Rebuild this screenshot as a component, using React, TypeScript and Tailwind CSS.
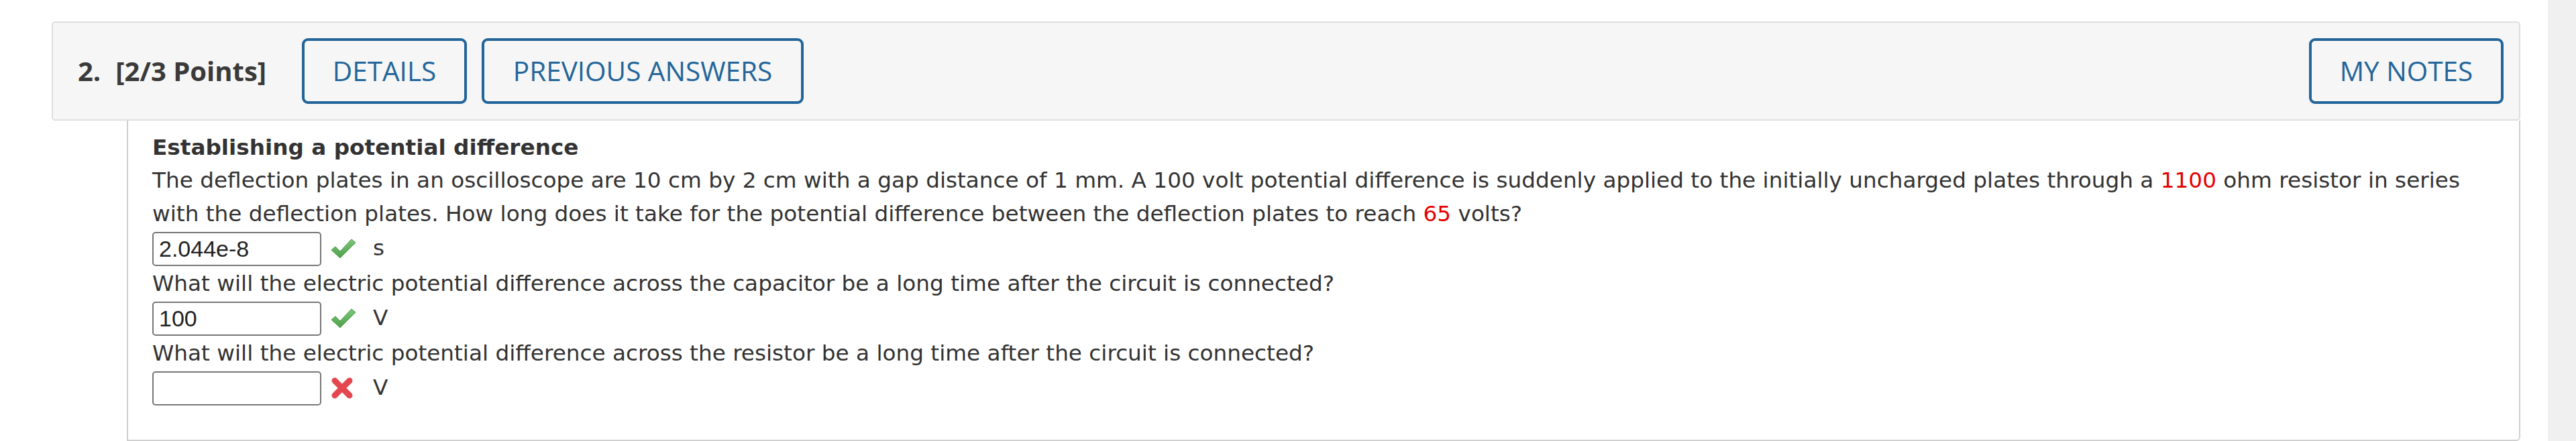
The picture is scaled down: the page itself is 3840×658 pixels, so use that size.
import React from 'react';

const verdana = "font-['DejaVu_Sans',Verdana,sans-serif]";

function CheckMark() {
  return (
    <svg width="40" height="32" viewBox="0 0 40 32" className="shrink-0">
      <defs>
        <linearGradient id="okg" x1="0" y1="0" x2="0" y2="1">
          <stop offset="0" stopColor="#7cc879" />
          <stop offset="1" stopColor="#4f9f4c" />
        </linearGradient>
      </defs>
      <path
        d="M2 18 L8 13 L15 20 L32 2 L38 7 L15 30 Z"
        fill="url(#okg)"
        stroke="#4a9a47"
        strokeWidth="1"
        strokeLinejoin="round"
      />
    </svg>
  );
}

function CrossMark() {
  return (
    <svg width="36" height="34" viewBox="0 0 36 34" className="shrink-0">
      <g stroke="#e5474f" strokeWidth="9" strokeLinecap="round">
        <line x1="7" y1="6" x2="29" y2="28" />
        <line x1="29" y1="6" x2="7" y2="28" />
      </g>
    </svg>
  );
}

function AnswerRow({ value, ok, unit }: { value: string; ok: boolean; unit: string }) {
  return (
    <div className="flex items-center h-[54px]">
      <div className="w-[252px] h-[51px] border-2 border-[#777] rounded-[5px] bg-white flex items-center pl-[8px] font-['Liberation_Sans',Arial,sans-serif] text-[34px] text-[#222]">
        {value}
      </div>
      <div className="ml-[13px] w-[40px] flex items-center">{ok ? <CheckMark /> : <CrossMark />}</div>
      <span className={`ml-[24px] text-[32.7px] text-[#333] ${verdana}`}>{unit}</span>
    </div>
  );
}

function HeaderButton({ label, width }: { label: string; width: string }) {
  return (
    <button
      className={`${width} h-[98px] border-4 border-[#23659a] rounded-[9px] text-[#23659a] text-[40.5px] font-medium font-['Open_Sans',sans-serif] flex items-center justify-center bg-transparent`}
    >
      {label}
    </button>
  );
}

export default function App() {
  return (
    <div className="flex w-full h-[658px] bg-white">
      <div className="flex-1 pt-[32px] pl-[77px] pr-[41px] flex flex-col">
        {/* question header */}
        <div className="h-[148px] border-2 border-[#dedede] rounded-[5px] bg-[#f6f6f6] flex items-center pl-[37px] pr-[23px]">
          <span className="font-['Open_Sans',sans-serif] font-bold text-[40px] text-[#3a3a3a]">2.</span>
          <span className="ml-[22px] font-['Open_Sans',sans-serif] font-bold text-[40px] text-[#3a3a3a]">[2/3 Points]</span>
          <div className="ml-[53px] flex gap-[22px]">
            <HeaderButton label="DETAILS" width="w-[246px]" />
            <HeaderButton label="PREVIOUS ANSWERS" width="w-[480px]" />
          </div>
          <div className="ml-auto">
            <HeaderButton label="MY NOTES" width="w-[290px]" />
          </div>
        </div>

        {/* question body */}
        <div className={`flex-1 ml-[112px] border-l-2 border-r-2 border-b-2 border-[#cfcfcf] rounded-br-[6px] pt-[16px] pl-[36px] pr-[20px] text-[#333] text-[32.7px] ${verdana}`}>
          <div className="font-bold leading-[48px]">Establishing a potential difference</div>
          <p className="leading-[50px]">
            The deflection plates in an oscilloscope are 10 cm by 2 cm with a gap distance of 1 mm. A 100 volt potential
            difference is suddenly applied to the initially uncharged plates through a{' '}
            <span className="text-[#e60000]">1100</span> ohm resistor in series
            <br />
            with the deflection plates. How long does it take for the potential difference between the deflection plates
            to reach <span className="text-[#e60000]">65</span> volts?
          </p>
          <AnswerRow value="2.044e-8" ok unit="s" />
          <p className="leading-[50px]">
            What will the electric potential difference across the capacitor be a long time after the circuit is
            connected?
          </p>
          <AnswerRow value="100" ok unit="V" />
          <p className="leading-[50px]">
            What will the electric potential difference across the resistor be a long time after the circuit is
            connected?
          </p>
          <AnswerRow value="" ok={false} unit="V" />
        </div>
      </div>
      <div className="w-[42px] h-full bg-[#f0f0f0]" />
    </div>
  );
}
